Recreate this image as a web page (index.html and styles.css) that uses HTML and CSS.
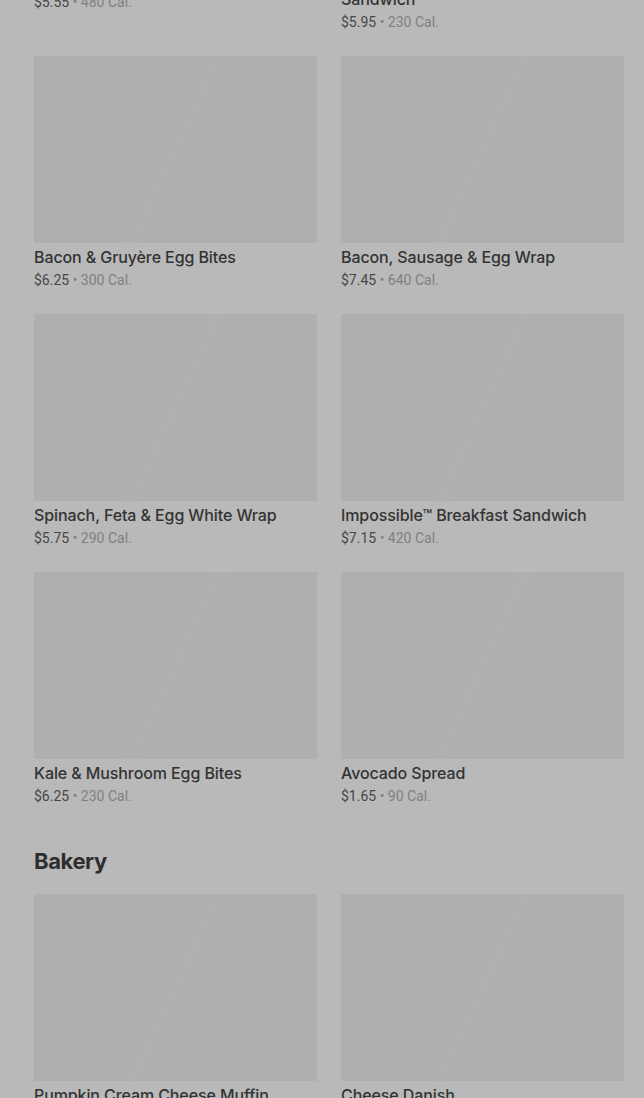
FILE: index.html
```html
<!DOCTYPE html>
<html lang="en">
<head>
<meta charset="utf-8">
<title>Menu</title>
<link rel="stylesheet" href="styles.css">
</head>
<body>
<main class="menu">
  <section class="section section-first">
    <h2 class="section-title">Breakfast</h2>
    <div class="grid">
      <article class="item">
        <div class="thumb"></div>
        <h3 class="item-name">Sausage, Cheddar &amp; Egg Sandwich</h3>
        <p class="item-meta"><span class="price">$5.55</span> <span class="cal">• 480 Cal.</span></p>
      </article>
      <article class="item">
        <div class="thumb"></div>
        <h3 class="item-name">Turkey Bacon, Cheddar &amp; Egg White Sandwich</h3>
        <p class="item-meta"><span class="price">$5.95</span> <span class="cal">• 230 Cal.</span></p>
      </article>
      <article class="item">
        <div class="thumb"></div>
        <h3 class="item-name">Bacon &amp; Gruyère Egg Bites</h3>
        <p class="item-meta"><span class="price">$6.25</span> <span class="cal">• 300 Cal.</span></p>
      </article>
      <article class="item">
        <div class="thumb"></div>
        <h3 class="item-name">Bacon, Sausage &amp; Egg Wrap</h3>
        <p class="item-meta"><span class="price">$7.45</span> <span class="cal">• 640 Cal.</span></p>
      </article>
      <article class="item">
        <div class="thumb"></div>
        <h3 class="item-name">Spinach, Feta &amp; Egg White Wrap</h3>
        <p class="item-meta"><span class="price">$5.75</span> <span class="cal">• 290 Cal.</span></p>
      </article>
      <article class="item">
        <div class="thumb"></div>
        <h3 class="item-name">Impossible™ Breakfast Sandwich</h3>
        <p class="item-meta"><span class="price">$7.15</span> <span class="cal">• 420 Cal.</span></p>
      </article>
      <article class="item">
        <div class="thumb"></div>
        <h3 class="item-name">Kale &amp; Mushroom Egg Bites</h3>
        <p class="item-meta"><span class="price">$6.25</span> <span class="cal">• 230 Cal.</span></p>
      </article>
      <article class="item">
        <div class="thumb"></div>
        <h3 class="item-name">Avocado Spread</h3>
        <p class="item-meta"><span class="price">$1.65</span> <span class="cal">• 90 Cal.</span></p>
      </article>
    </div>
  </section>
  <section class="section">
    <h2 class="section-title">Bakery</h2>
    <div class="grid">
      <article class="item">
        <div class="thumb"></div>
        <h3 class="item-name">Pumpkin Cream Cheese Muffin</h3>
        <p class="item-meta"><span class="price">$3.45</span> <span class="cal">• 350 Cal.</span></p>
      </article>
      <article class="item">
        <div class="thumb"></div>
        <h3 class="item-name">Cheese Danish</h3>
        <p class="item-meta"><span class="price">$3.25</span> <span class="cal">• 290 Cal.</span></p>
      </article>
    </div>
  </section>
</main>
</body>
</html>
```

FILE: styles.css
```css
html, body {
  margin: 0;
  padding: 0;
  background: #b9b9b9;
  overflow: hidden;
}

body {
  font-family: Roboto, "Liberation Sans", Arial, sans-serif;
  color: #333333;
}

.menu {
  padding: 0 20px 0 34px;
}

.section {
  padding-bottom: 41px;
}

.section-first {
  margin-top: -269px;
}

.section-title {
  margin: 0 0 19px;
  font-family: Inter, Roboto, "Liberation Sans", Arial, sans-serif;
  font-size: 22px;
  line-height: 28px;
  font-weight: 700;
  color: #2e2e2e;
  letter-spacing: -0.4px;
}

.grid {
  display: grid;
  grid-template-columns: 1fr 1fr;
  column-gap: 24px;
  row-gap: 24px;
  align-items: start;
}

.item {
  margin: 0;
}

.thumb {
  height: 187px;
  background: linear-gradient(115deg, #afafaf 0%, #afafaf 46%, #b0b0b0 50%, #afafaf 54%, #afafaf 100%);
}

.item-name {
  margin: 4px 0 0;
  font-family: Inter, Roboto, "Liberation Sans", Arial, sans-serif;
  font-size: 16px;
  line-height: 20px;
  font-weight: 500;
  color: #333333;
  letter-spacing: -0.1px;
}

.item-meta {
  margin: 3px 0 0;
  font-size: 14px;
  line-height: 20px;
  letter-spacing: 0;
}

.price {
  color: #474747;
}

.cal {
  color: #808080;
}
```
